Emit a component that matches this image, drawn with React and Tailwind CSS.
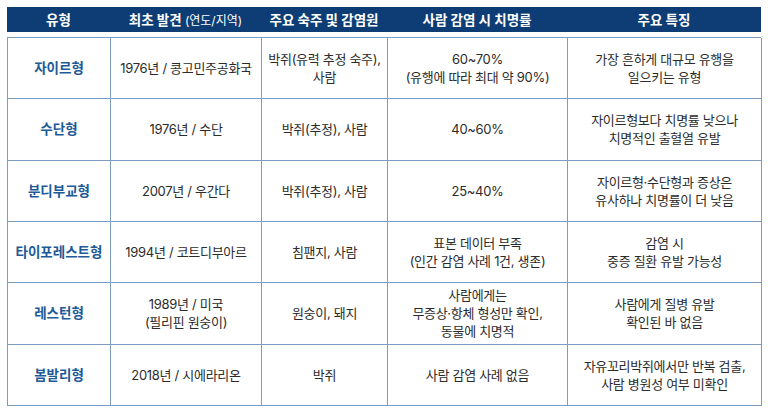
import React from "react";

const rows = [
  ["자이르형", ["1976년 / 콩고민주공화국"], ["박쥐(유력 추정 숙주),", "사람"], ["60~70%", "(유행에 따라 최대 약 90%)"], ["가장 흔하게 대규모 유행을", "일으키는 유형"]],
  ["수단형", ["1976년 / 수단"], ["박쥐(추정), 사람"], ["40~60%"], ["자이르형보다 치명률 낮으나", "치명적인 출혈열 유발"]],
  ["분디부교형", ["2007년 / 우간다"], ["박쥐(추정), 사람"], ["25~40%"], ["자이르형·수단형과 증상은", "유사하나 치명률이 더 낮음"]],
  ["타이포레스트형", ["1994년 / 코트디부아르"], ["침팬지, 사람"], ["표본 데이터 부족", "(인간 감염 사례 1건, 생존)"], ["감염 시", "중증 질환 유발 가능성"]],
  ["레스턴형", ["1989년 / 미국", "(필리핀 원숭이)"], ["원숭이, 돼지"], ["사람에게는", "무증상·항체 형성만 확인,", "동물에 치명적"], ["사람에게 질병 유발", "확인된 바 없음"]],
  ["봄발리형", ["2018년 / 시에라리온"], ["박쥐"], ["사람 감염 사례 없음"], ["자유꼬리박쥐에서만 반복 검출,", "사람 병원성 여부 미확인"]],
];

const cols = "grid-cols-[103px_151px_126px_180px_194px]";

export default function App() {
  return (
    <div
      className="w-[768px] h-[412px] bg-white pt-[7px] pl-[7px]"
      style={{ fontFamily: 'Inter, "Noto Sans CJK KR", sans-serif' }}
    >
      <div className={`grid ${cols} w-[754px] h-[25px] pt-[1px] bg-[#0d3d74] text-white text-[13.5px] font-bold items-center text-center`}>
        <div>유형</div>
        <div>
          최초 발견 <span className="font-normal text-[12px]">(연도/지역)</span>
        </div>
        <div>주요 숙주 및 감염원</div>
        <div>사람 감염 시 치명률</div>
        <div>주요 특징</div>
      </div>
      <div className={`mt-[5px] grid ${cols} grid-rows-6 w-[754px] h-[369px] border-l border-t border-[#7b9cc3]`}>
        {rows.map((r, i) => (
          <React.Fragment key={i}>
            <div className="flex items-center justify-center border-r border-b border-[#7b9cc3] text-[13.5px] font-bold text-[#1d5a97] text-center leading-[18px]">
              {r[0]}
            </div>
            {r.slice(1).map((lines, j) => (
              <div
                key={j}
                className="flex flex-col items-center justify-center border-r border-b border-[#7b9cc3] text-[13px] text-[#2b2b2b] text-center leading-[18px] tracking-[-0.3px]"
              >
                {lines.map((l, k) => (
                  <div key={k}>{l}</div>
                ))}
              </div>
            ))}
          </React.Fragment>
        ))}
      </div>
    </div>
  );
}
